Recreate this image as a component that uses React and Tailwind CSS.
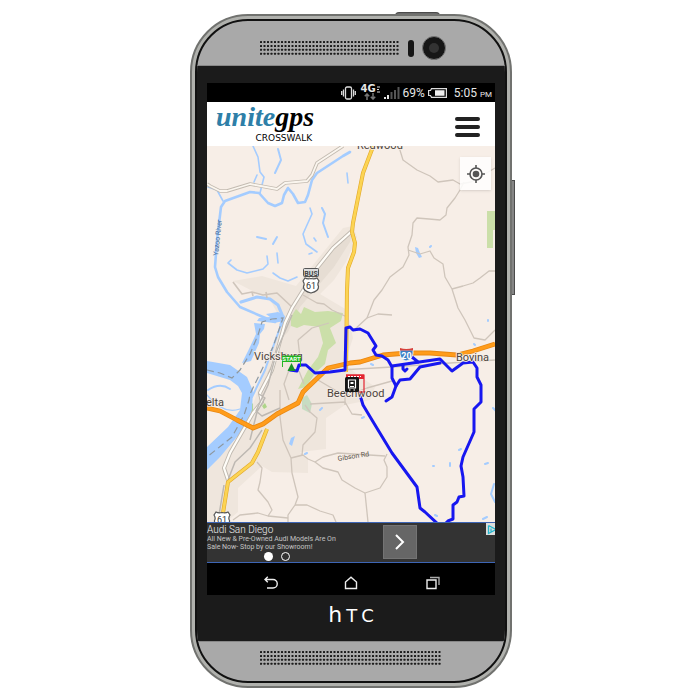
import React from "react";

function Grille({ columns }) {
  const dots = [];
  for (let r = 0; r < 4; r++) {
    for (let c = 0; c < columns; c++) {
      dots.push(<rect key={`${r}-${c}`} x={c * 3.5} y={r * 3.9} width="2" height="2" rx="0.5" />);
    }
  }
  return (
    <svg aria-hidden="true" width={columns * 3.5} height="14" className="shrink-0 fill-[#1b1b1b]">
      {dots}
    </svg>
  );
}

function StatusBar() {
  return (
    <div className="flex h-[19px] items-center justify-end gap-[3px] bg-black pr-[3px] font-[Roboto,sans-serif] text-[11px] leading-none text-[#e6e6e6]">
      <svg width="15" height="14" viewBox="0 0 15 14" fill="none" stroke="#ddd" strokeWidth="1.3" aria-label="Vibrate">
        <rect x="4.5" y="1" width="6" height="12" rx="1.5" />
        <path d="M2.5 3.500v7M12.500 3.500v7M.7 5v4M14.300 5v4" />
      </svg>
      <div className="ml-[2px] flex w-[19px] flex-col items-center">
        <span className="flex items-center gap-px font-['DejaVu_Sans',sans-serif] text-[10px] font-bold leading-[8px]">
          4G
          <svg width="3" height="7" viewBox="0 0 3 7" stroke="#ddd" aria-label="LTE"><path d="M0 1h3M0 3.500h2M0 6h3" /></svg>
        </span>
        <svg width="12" height="7" viewBox="0 0 12 7" fill="none" stroke="#777" strokeWidth="1.5" aria-hidden="true">
          <path d="M3 7V1M.8 3.300 3 1l2.200 2.300M9 0v6M6.800 3.700 9 6l2.200-2.300" />
        </svg>
      </div>
      <svg width="17" height="14" viewBox="0 0 17 14" aria-label="Signal">
        <g fill="#e6e6e6"><rect x="1" y="11" width="2" height="2" /><rect x="4" y="9" width="2" height="4" /></g>
        <g fill="#555"><rect x="7.500" y="6" width="2" height="7" /><rect x="11" y="4" width="2" height="9" /><rect x="14.500" y="1" width="2" height="12" /></g>
      </svg>
      <span className="text-[12px]">69%</span>
      <svg width="19" height="10" viewBox="0 0 19 10" fill="none" stroke="#ddd" strokeWidth="1.200" aria-label="Battery">
        <path d="M3.500.6h14.900v8.800H3.500L2.500 7.500H.6v-5h1.900z" />
        <path d="M7 2.300h9.500v5.400H7z" fill="#eee" stroke="none" />
      </svg>
      <span className="ml-1 text-[12px]">5:05 <span className="text-[8px]">PM</span></span>
    </div>
  );
}

function AppHeader() {
  return (
    <header className="flex h-11 items-start justify-between bg-white pl-[9px] pr-[15px]">
      <a href="#home" className="flex flex-col items-end text-black">
        <span className="font-['Liberation_Serif',serif] text-[28px] font-bold italic leading-[30px]">
          <span className="text-[#2e7fa8]">unite</span>gps
        </span>
        <span className="pr-[2px] font-['DejaVu_Sans',sans-serif] text-[9px] leading-[12px]">CROSSWALK</span>
      </a>
      <button aria-label="Menu" className="mt-[15px] flex w-[25px] flex-col gap-1">
        <span className="h-[4px] w-full rounded-full bg-[#222]" />
        <span className="h-[4px] w-full rounded-full bg-[#222]" />
        <span className="h-[4px] w-full rounded-full bg-[#222]" />
      </button>
    </header>
  );
}

const minorRoads = [
  "M399 147 403 160 417 170 430 176 438 182 453 180 460 184 471 182 495 168",
  "M464 182 460 190 455 198 447 208 446 215 440 220 429 219 417 218 413 223 412 235 408 247 409 255 403 267 390 277 382 290 374 300 367 318 354 330",
  "M408 250 420 254 430 251 434 258 443 264 445 277 452 289 458 308 465 320 470 330 474 338 485 340 495 330",
  "M452 289 463 286 473 283 480 278 489 271 495 271",
  "M367 318 378 314 392 315",
  "M303 295 317 303 324 304 332 310 347 317",
  "M280 390 280 417 283 440 291 458 292 473 298 497 295 505 288 515 288 522",
  "M291 458 303 455 308 459 315 462 323 457 338 453 385 456",
  "M315 462 323 468 338 472 342 480 355 488 365 493 380 488 387 477 387 467 384 460 387 454",
  "M365 493 368 522",
  "M295 505 307 505 320 511 333 515 336 522",
  "M257 462 262 468 260 482 258 490 268 502 272 510 268 516 258 513 240 515 233 520",
  "M268 516 288 518",
  "M305 405 310 412 317 418 315 432 303 445 302 455",
  "M310 404 345 402 352 414 362 415",
  "M340 370 392 367 450 363 495 360",
  "M345 396 367 388 392 381",
  "M298 340 300 358 278 352 268 374",
  "M298 340 312 328 329 323",
  "M289 370 284 384 289 400",
  "M318 380 345 396 345 405",
  "M299 371 304 384",
];

const streams = [
  "M253 146 258 157 260 172 264 177 260 193",
  "M208 187 217 190 223 201",
  "M257 175 254 182",
  "M310 208 312 214 307 225 303 234 306 244 317 252",
  "M267 256 268 264 263 269 247 273 237 270 228 263 231 260",
  "M273 273 280 278 288 281 297 277",
  "M277 253 278 263",
  "M347 173 348 183",
  "M309 254 312 253",
  "M314 238 316 241",
];

const route = [
  "M290 370 297 371 299 365 306 365 315 373 330 372 345 370 346 328 350 327 353 330 360 329 368 333 376 346 373 350 376 355 382 356 388 360 392 367 392 378 396 386 392 397 386 401",
  "M396 386 400 380 410 379 420 367 440 363",
  "M392 366 440 359 452 371 463 363 473 362 477 368 477 377 481 385 481 402 474 409 474 432 463 457 461 466 463 477 464 496 459 497 457 502 453 505 453 519 448 521 444 525",
  "M360 395 363 405 372 420 392 453 417 487 420 508 425 512 439 525",
  "M412 357 418 362",
  "M403 365 403 369 405 371 407 369",
];

function Shield({ x, y, label }) {
  return (
    <g transform={`translate(${x} ${y})`}>
      <path d="M2 0Q4.500 1.500 8 .5 11.500 1.500 14 0L16 3Q14 6 15.500 8.500 16 13 8 15 0 13 .5 8.500 2 6 0 3z" fill="#fff" stroke="#555" strokeWidth="1.200" />
      <text x="8" y="11" textAnchor="middle" fontSize="9" fill="#333">{label}</text>
    </g>
  );
}

function RouteMap() {
  return (
    <svg viewBox="207 146 288 376" preserveAspectRatio="xMidYMid slice" className="block w-full font-[Roboto,sans-serif]" role="img" aria-label="Bus route map">
      <path fill="#f7eee7" d="M207 146h288v376H207z" />
      <path fill="#efe6dd" d="M233 281 262 276 296 286 343 228 353 226 357 237 346 262 334 280 320 294 347 310 353 338 345 362 353 371 375 387 370 400 345 405 326 418 326 449 300 452 308 460 308 473 272 472 262 466 238 488 238 512 226 522 207 522V470L243 432 256 396 272 348 283 323 270 300z" />
      <path fill="#e6ddd3" d="m352 234-12 8-20 25-30 40-12 35 10-10 12-25 34-40 16-25z" />
      <path fill="#cbdfa9" d="M291 317 296 309 301 314 304 307 315 312 328 311 343 313 341 321 330 328 336 343 328 350 325 364 316 372 306 387 298 389 308 370 318 357 323 343 319 327 304 325 297 328 291 326zM487 211h8v19h-2v18h-6z" />
      <path fill="#c7dcc2" d="M302 398 307 395 312 404 310 413 302 409z" />
      <path fill="#aed58a" d="m262 406 3-3 2 4-3 2zM251 405l2-2v8l-2 1z" />

      <path fill="#a4ccff" d="M207 361 230 365 247 377 253 391 252 410 242 431 220 457 207 470V447L228 427 240 410 242 393 238 386 230 380 207 373z" />
      <path fill="#a4ccff" d="M254 323 265 324 264 329 260 334 259 343 251 361 242 363 249 349 256 334zM266 314 278 312 285 316 284 321 274 323 257 321 259 318 270 317zM291 438 295 436 292 446 289 444zM415 247l3 1 2 5 2 4-3 1-3-5z" />
      <g fill="none" stroke="#a4ccff" strokeLinejoin="round" strokeLinecap="round">
        <path strokeWidth="2.600" d="M350 152 343 156 317 173 312 180 308 195 305 202 298 203 293 194 288 188 284 195 282 203 275 206 268 203 259 193 250 192 225 201 221 207 217 240 215 267 218 277 227 292 240 307 263 317 275 322" />
        <path strokeWidth="3.200" d="M241 302 257 297 270 299 278 305 283 317 281 325" />
        <path strokeWidth="2" d="M281 325 273 347 265 370 252 397M278 149 281 160 275 173M322 208 325 214 323 223 328 237M257 237l9 2M277 237l-4 7M208 390q12-8 22-1" />
        <path strokeWidth="1.300" d="M207 395q16 20 33 14" />
        <g strokeWidth="1.600">{streams.map((d) => <path key={d} d={d} />)}</g>
        <path strokeWidth="2" d="m362 418 2-1M450 463v3M485 464l3-1M494 484l-3 10 4 8M483 519l4-2M435 515l2 1M433 466h1M320 410l2-2M305 454l2-1M371 364l2 1M474 344l1 1M488 320v1M430 247l1-1M459 450l2-1M493 408l3 3" />
      </g>
      <path fill="none" stroke="#8d979f" strokeWidth="1.200" strokeDasharray="7 4" d="M207 370 220 373 232 378 240 370 250 354 258 335 262 322 272 319 283 318 273 347 250 394 249 400 244 415 232 437 207 457" />

      <g fill="none" stroke="#cfc5bb" strokeWidth="1.300" strokeLinejoin="round">
        {minorRoads.map((d) => <path key={d} d={d} />)}
        <path d="M233 282 242 294 252 292 263 295 277 293 292 307M252 292l1 4M266 292l1 6" strokeWidth="1.600" />
      </g>
      <g fill="none" strokeLinejoin="round">
        <path stroke="#c3bbb1" strokeWidth="3.600" d="M207 184 210 186 220 191 227 191 250 184 277 189 285 183 307 181 312 175 317 163 343 146" />
        <path stroke="#fbf6ef" strokeWidth="1.800" d="M207 184 210 186 220 191 227 191 250 184 277 189 285 183 307 181 312 175 317 163 343 146" />
        <path stroke="#bfb8af" strokeWidth="4" d="M352 231 333 248 317 268 292 308 285 323 272 370 260 393 262 402 253 413 230 453 224 468 228 480" />
        <path stroke="#fffdf8" strokeWidth="2.200" d="M352 231 333 248 317 268 292 308 285 323 272 370 260 393 262 402 253 413 230 453 224 468 228 480" />
        <path stroke="#bdb8b2" strokeWidth="1.500" d="M292 315 277 350 268 385 256 411 262 416 280 408M262 430 250 448 235 462 228 480M224 485 219 515M259 394 265 398 257 412 250 440" />
        <path stroke="#e2a92c" strokeWidth="4" d="M374 144 363 173 353 223 352 232 355 243 354 252 348 268 347 290 346 372M267 429 258 452 252 463 228 482 223 513 222 525" />
        <path stroke="#fcd453" strokeWidth="2.800" d="M374 144 363 173 353 223 352 232 355 243 354 252 348 268 347 290 346 372M267 429 258 452 252 463 228 482 223 513 222 525" />
        <path stroke="#e98812" strokeWidth="4.800" d="M207 408 220 411 237 420 253 428 263 424 277 414 298 403 303 392 307 388 328 368 350 363 360 362 383 355 407 353 430 353 457 355 473 351 495 344" />
        <path stroke="#ff9c1b" strokeWidth="3.200" d="M207 408 220 411 237 420 253 428 263 424 277 414 298 403 303 392 307 388 328 368 350 363 360 362 383 355 407 353 430 353 457 355 473 351 495 344" />
      </g>

      <rect x="303.500" y="268.500" width="15" height="8" rx="1" fill="#ddd" stroke="#555" />
      <text x="311" y="275.500" textAnchor="middle" fontSize="7" fontWeight="700" fill="#444">BUS</text>
      <Shield x={303} y={278} label="61" />
      <Shield x={214} y={512} label="61" />

      <g fill="none" stroke="#1717f0" strokeWidth="3" strokeLinejoin="round" strokeLinecap="round">
        {route.map((d) => <path key={d} d={d} />)}
      </g>

      <g fontSize="11" fill="#4c443d" stroke="#f7eee7" strokeWidth="1.500" paintOrder="stroke">
        <text x="254" y="360">Vicksburg</text>
        <text x="327" y="397">Beechwood</text>
        <text x="456" y="361">Bovina</text>
        <text x="206" y="406">elta</text>
        <text x="357" y="149">Redwood</text>
      </g>
      <text transform="translate(218 256) rotate(-84)" fontSize="7" fill="#446a97">Yazoo River</text>
      <text transform="translate(338 461) rotate(-9)" fontSize="7" fill="#5d554c">Gibson Rd</text>

      <path d="M400 350q-1 9 6 11 8-2 7-11z" fill="#3b7fc4" stroke="#fff" strokeWidth=".8" />
      <path d="M400 348q6 2 13 0v2.500h-13z" fill="#d6413c" />
      <text x="406.500" y="358.500" textAnchor="middle" fontSize="9" fontWeight="700" fill="#fff">20</text>

      <path d="M282.500 367V356h18v11" fill="none" stroke="#26b526" />
      <path d="M282 356h19v6h-19z" fill="#20b420" />
      <text x="291.500" y="361" textAnchor="middle" fontSize="6" fontWeight="700" fill="#eaffea">START</text>
      <path d="m291.500 363 1.500 3 2.500 5h-8l2.500-5z" fill="#199226" />

      <path d="M346 375h18v17h-5" fill="none" stroke="#e32431" strokeWidth="1.200" />
      <path d="M346 374.500h18v4.500h-18z" fill="#e32431" />
      <path d="M348 376.500h13" stroke="#fff" strokeWidth="1" strokeDasharray="2 1" />
      <rect x="345" y="377" width="14" height="15" rx="1.500" fill="#151515" />
      <path d="M348.500 380h7v8h-7zM349 390h1.500M353.500 390h1.500" fill="none" stroke="#fff" strokeWidth="1.200" />
      <path d="M350.500 382h3v2h-3z" fill="#fff" />
      <path d="M350 386.500h4" stroke="#fff" />
    </svg>
  );
}

function MapPanel() {
  return (
    <main className="relative">
      <RouteMap />
      <button aria-label="My location" className="absolute right-1 top-[11px] flex h-[33px] w-[31px] items-center justify-center bg-white/85 shadow">
        <svg width="18" height="18" viewBox="0 0 18 18" fill="none" stroke="#555" strokeWidth="1.600">
          <circle cx="9" cy="9" r="6" />
          <circle cx="9" cy="9" r="3.300" fill="#555" stroke="none" />
          <path d="M9 0v3M9 15v3M0 9h3M15 9h3" />
        </svg>
      </button>
    </main>
  );
}

function AdBanner() {
  return (
    <aside className="relative flex h-[41px] items-start border-y border-[#3d65b5] bg-[#333] pt-[2px] font-[Roboto,sans-serif] text-[#ddd]">
      <div className="w-[176px]">
        <h2 className="text-[10px] font-light leading-[9px] text-[#f2f2f2]">Audi San Diego</h2>
        <p className="pt-px text-[7px] leading-[8px] text-[#c4c4c4]">All New &amp; Pre-Owned Audi Models Are On<br />Sale Now- Stop by our Showroom!</p>
        <div className="mt-px flex gap-2 pl-[57px]">
          <button aria-label="Ad 1" className="size-[9px] rounded-full bg-white" />
          <button aria-label="Ad 2" className="size-[9px] rounded-full border border-white" />
        </div>
      </div>
      <button aria-label="Open ad" className="flex size-[34px] items-center justify-center border border-[#747474] bg-[#666]">
        <svg width="10" height="16" viewBox="0 0 10 16" fill="none" stroke="#fff" strokeWidth="2"><path d="m1 1 7 7-7 7" /></svg>
      </button>
      <a href="#ad-choices" aria-label="Ad choices" className="absolute right-0 top-0 h-[12px] w-[9px] bg-[#ddd]">
        <svg width="9" height="12" viewBox="0 0 9 12" fill="none" stroke="#24b6cd" strokeWidth="1.300"><path d="M2.500 2.500v8L9 7M2.500 2.500 9 6M5 5.500v3" /></svg>
      </a>
    </aside>
  );
}

function NavBar() {
  return (
    <nav className="grid h-8 grid-cols-3 items-center bg-black px-6 pt-2">
      <button aria-label="Back" className="flex justify-center">
        <svg width="14" height="14" viewBox="0 0 14 14" fill="none" stroke="#eee" strokeWidth="1.400"><path d="M1 3.500h8a4 4 0 0 1 0 8.500H3M3.800.8 1 3.500l2.800 2.700" /></svg>
      </button>
      <button aria-label="Home" className="flex justify-center">
        <svg width="14" height="14" viewBox="0 0 14 14" fill="none" stroke="#eee" strokeWidth="1.400"><path d="M1.500 12.500V6L7 1.200 12.500 6v6.500z" /></svg>
      </button>
      <button aria-label="Recent apps" className="flex justify-center pl-1">
        <svg width="14" height="14" viewBox="0 0 14 14" fill="none" stroke="#eee" strokeWidth="1.400"><path d="M1 4h9v8.500H1z" /><path d="M4 1.500h9V9" stroke="#aaa" /></svg>
      </button>
    </nav>
  );
}

export default function App() {
  return (
    <div className="flex min-h-screen items-start justify-center bg-white pl-[2px] pt-[14px]">
      <div className="relative w-[322px]">
        <div className="absolute -top-[2px] right-[72px] h-1 w-[45px] rounded-t-sm border border-[#4b4b4b] bg-[#6b6b6b]" />
        <div className="absolute -right-[3px] top-[166px] h-[115px] w-1 border border-[#4b4b4b] bg-[#858585]" />
        <div className="relative rounded-[58px] border-2 border-[#71726f] bg-[#b0b1ad] p-[3px]">
          <div className="overflow-hidden rounded-[53px] border-2 border-[#111] bg-[#a9a9a9]">
            <div className="flex h-[45px] items-center justify-center gap-2 border-b border-[#888] pl-[3px] pt-[10px]">
              <Grille columns={40} />
              <span className="h-[17px] w-[6px] rounded-full bg-[#161616]" />
              <span className="flex size-[24px] items-center justify-center rounded-full border border-[#777] bg-[#161616]">
                <span className="size-[10px] rounded-full bg-[#333]" />
              </span>
            </div>
            <div className="bg-[#1b1b1b] px-[10px] pt-[17px]">
              <StatusBar />
              <AppHeader />
              <MapPanel />
              <AdBanner />
              <NavBar />
              <div className="flex h-[46px] items-baseline justify-center gap-1 pt-1 font-['DejaVu_Sans',sans-serif] leading-[32px] text-white">
                <span className="text-[22px]">h</span>
                <span className="text-[18px]">T</span>
                <span className="text-[18px]">C</span>
              </div>
            </div>
            <div className="flex h-10 justify-center border-t border-[#888] pt-[9px]">
              <Grille columns={52} />
            </div>
          </div>
        </div>
      </div>
    </div>
  );
}
